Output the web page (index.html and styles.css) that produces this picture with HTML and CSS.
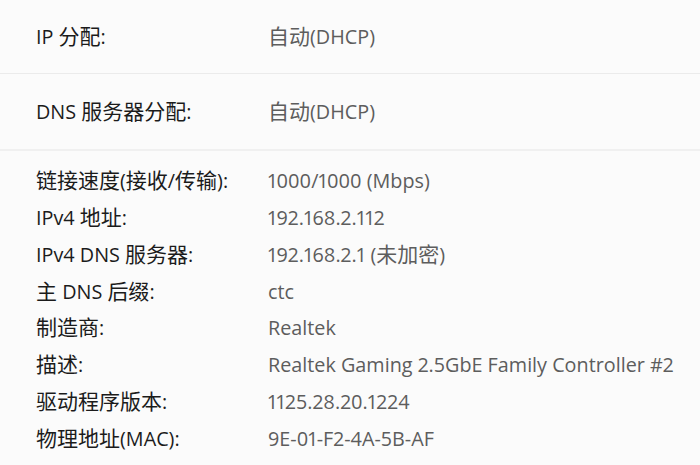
FILE: index.html
```html
<!DOCTYPE html>
<html lang="zh-CN">
<head>
<meta charset="utf-8">
<link rel="stylesheet" href="styles.css">
</head>
<body>
<div class="page">
  <div class="row top">
    <span class="label">IP <span class="zh">分配</span>:</span>
    <span class="value"><span class="zh">自动</span>(DHCP)</span>
  </div>
  <div class="row top last">
    <span class="label">DNS <span class="zh">服务器分配</span>:</span>
    <span class="value"><span class="zh">自动</span>(DHCP)</span>
  </div>
  <div class="details">
    <span class="label"><span class="zh">链接速度</span>(<span class="zh">接收</span>/<span class="zh">传输</span>):</span><span class="value">1000/1000 (Mbps)</span>
    <span class="label">IPv4 <span class="zh">地址</span>:</span><span class="value">192.168.2.112</span>
    <span class="label">IPv4 DNS <span class="zh">服务器</span>:</span><span class="value">192.168.2.1 (<span class="zh">未加密</span>)</span>
    <span class="label"><span class="zh">主</span> DNS <span class="zh">后缀</span>:</span><span class="value">ctc</span>
    <span class="label"><span class="zh">制造商</span>:</span><span class="value">Realtek</span>
    <span class="label"><span class="zh">描述</span>:</span><span class="value">Realtek Gaming 2.5GbE Family Controller #2</span>
    <span class="label"><span class="zh">驱动程序版本</span>:</span><span class="value">1125.28.20.1224</span>
    <span class="label"><span class="zh">物理地址</span>(MAC):</span><span class="value">9E-01-F2-4A-5B-AF</span>
  </div>
</div>
</body>
</html>
```
FILE: styles.css
```css
html, body {
  margin: 0;
  padding: 0;
  background: #fbfbfb;
}
body {
  font-family: "Open Sans", "Noto Sans CJK SC", sans-serif;
  font-size: 19.8px;
  font-variant-numeric: proportional-nums;
  color: #1b1b1b;
}
.page {
  width: 700px;
  height: 465px;
  overflow: hidden;
}
.zh {
  font-family: "Noto Sans CJK SC", sans-serif;
  font-size: 21px;
  line-height: 1;
}
.row {
  display: grid;
  grid-template-columns: 232px 1fr;
  align-items: center;
  height: 73px;
  padding-left: 36px;
  border-bottom: 1px solid #ebebeb;
}
.row.last {
  height: 75px;
  border-bottom: 2px solid #f0f0f0;
}
.details {
  display: grid;
  grid-template-columns: 232px 1fr;
  grid-auto-rows: 36.86px;
  align-items: center;
  padding: 11px 0 0 36px;
}
.value {
  color: #5d5d5d;
}
```
